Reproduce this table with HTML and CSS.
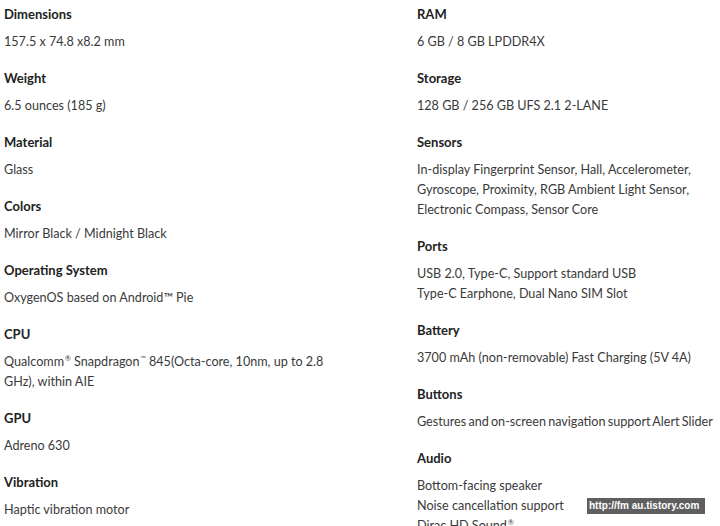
FILE: index.html
```html
<!DOCTYPE html>
<html>
<head>
<meta charset="utf-8">
<link rel="stylesheet" href="styles.css">
</head>
<body>
<div class="specs">
  <div class="col">
    <div class="item"><div class="label">Dimensions</div><div class="value">157.5 x 74.8 x8.2 mm</div></div>
    <div class="item"><div class="label">Weight</div><div class="value">6.5 ounces (185 g)</div></div>
    <div class="item"><div class="label">Material</div><div class="value">Glass</div></div>
    <div class="item"><div class="label">Colors</div><div class="value">Mirror Black / Midnight Black</div></div>
    <div class="item"><div class="label">Operating System</div><div class="value">OxygenOS based on Android™ Pie</div></div>
    <div class="item"><div class="label">CPU</div><div class="value">Qualcomm<sup>®</sup> Snapdragon<sup>™</sup> 845(Octa-core, 10nm, up to 2.8<br>GHz), within AIE</div></div>
    <div class="item"><div class="label">GPU</div><div class="value">Adreno 630</div></div>
    <div class="item"><div class="label">Vibration</div><div class="value">Haptic vibration motor</div></div>
  </div>
  <div class="col">
    <div class="item"><div class="label">RAM</div><div class="value">6 GB / 8 GB LPDDR4X</div></div>
    <div class="item"><div class="label">Storage</div><div class="value">128 GB / 256 GB UFS 2.1 2-LANE</div></div>
    <div class="item"><div class="label">Sensors</div><div class="value">In-display Fingerprint Sensor, Hall, Accelerometer,<br>Gyroscope, Proximity, RGB Ambient Light Sensor,<br>Electronic Compass, Sensor Core</div></div>
    <div class="item"><div class="label">Ports</div><div class="value">USB 2.0, Type-C, Support standard USB<br>Type-C Earphone, Dual Nano SIM Slot</div></div>
    <div class="item"><div class="label">Battery</div><div class="value">3700 mAh (non-removable) Fast Charging (5V 4A)</div></div>
    <div class="item"><div class="label">Buttons</div><div class="value tight">Gestures and on-screen navigation support Alert Slider</div></div>
    <div class="item"><div class="label">Audio</div><div class="value">Bottom-facing speaker<br>Noise cancellation support<br>Dirac HD Sound<sup>®</sup></div></div>
  </div>
</div>
<div class="watermark">http://fm au.tistory.com</div>
</body>
</html>
```
FILE: styles.css
```css
html, body {
  margin: 0;
  padding: 0;
  background: #fff;
  overflow: hidden;
  height: 526px;
}
body {
  font-family: Lato, "Liberation Sans", sans-serif;
  color: #333;
  position: relative;
}
.specs {
  display: grid;
  grid-template-columns: 413px 1fr;
  padding: 4px 0 0 4px;
}
.col {
  display: flex;
  flex-direction: column;
}
.item {
  padding-bottom: 16px;
}
.label {
  font-size: 13px;
  font-weight: 700;
  line-height: 20px;
  color: #222;
  margin-bottom: 8px;
}
.value {
  font-size: 12.6px;
  line-height: 20px;
  color: #3a3a3a;
  white-space: nowrap;
}
.value.tight {
  word-spacing: -1px;
}
sup {
  font-size: 7px;
  line-height: 0;
  vertical-align: 5px;
  margin-left: 1px;
}
.watermark {
  position: absolute;
  left: 587px;
  top: 498px;
  width: 118px;
  height: 16px;
  background: #5f5f5f;
  color: #fff;
  font-family: "Liberation Sans", Arial, sans-serif;
  font-size: 10px;
  font-weight: 700;
  line-height: 16px;
  padding-left: 2px;
  box-sizing: border-box;
  white-space: nowrap;
}
```
